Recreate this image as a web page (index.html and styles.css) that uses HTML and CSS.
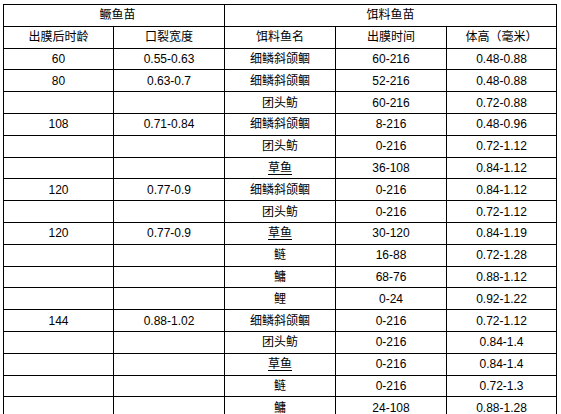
FILE: index.html
```html
<!DOCTYPE html>
<html lang="zh-CN">
<head>
<meta charset="utf-8">
<title>鳜鱼苗与饵料鱼苗</title>
<link rel="stylesheet" href="styles.css">
</head>
<body>
<table class="fish-table">
  <colgroup>
    <col class="c1"><col class="c2"><col class="c3"><col class="c4"><col class="c5">
  </colgroup>
  <thead>
    <tr><th colspan="2" class="group">鳜鱼苗</th><th colspan="3">饵料鱼苗</th></tr>
    <tr><th>出膜后时龄</th><th>口裂宽度</th><th>饵料鱼名</th><th>出膜时间</th><th>体高（毫米）</th></tr>
  </thead>
  <tbody>
    <tr><td>60</td><td>0.55-0.63</td><td>细鳞斜颌鲴</td><td>60-216</td><td>0.48-0.88</td></tr>
    <tr><td>80</td><td>0.63-0.7</td><td>细鳞斜颌鲴</td><td>52-216</td><td>0.48-0.88</td></tr>
    <tr><td></td><td></td><td>团头鲂</td><td>60-216</td><td>0.72-0.88</td></tr>
    <tr><td>108</td><td>0.71-0.84</td><td>细鳞斜颌鲴</td><td>8-216</td><td>0.48-0.96</td></tr>
    <tr><td></td><td></td><td>团头鲂</td><td>0-216</td><td>0.72-1.12</td></tr>
    <tr><td></td><td></td><td><span class="link">草鱼</span></td><td>36-108</td><td>0.84-1.12</td></tr>
    <tr><td>120</td><td>0.77-0.9</td><td>细鳞斜颌鲴</td><td>0-216</td><td>0.84-1.12</td></tr>
    <tr><td></td><td></td><td>团头鲂</td><td>0-216</td><td>0.72-1.12</td></tr>
    <tr><td>120</td><td>0.77-0.9</td><td><span class="link">草鱼</span></td><td>30-120</td><td>0.84-1.19</td></tr>
    <tr><td></td><td></td><td>鲢</td><td>16-88</td><td>0.72-1.28</td></tr>
    <tr><td></td><td></td><td>鳙</td><td>68-76</td><td>0.88-1.12</td></tr>
    <tr><td></td><td></td><td>鲤</td><td>0-24</td><td>0.92-1.22</td></tr>
    <tr><td>144</td><td>0.88-1.02</td><td>细鳞斜颌鲴</td><td>0-216</td><td>0.72-1.12</td></tr>
    <tr><td></td><td></td><td>团头鲂</td><td>0-216</td><td>0.84-1.4</td></tr>
    <tr><td></td><td></td><td><span class="link">草鱼</span></td><td>0-216</td><td>0.84-1.4</td></tr>
    <tr><td></td><td></td><td>鲢</td><td>0-216</td><td>0.72-1.3</td></tr>
    <tr><td></td><td></td><td>鳙</td><td>24-108</td><td>0.88-1.28</td></tr>
  </tbody>
</table>
</body>
</html>
```

FILE: styles.css
```css
html, body {
  margin: 0;
  padding: 0;
  background: #ffffff;
}

body {
  padding: 4px 0 0 3px;
  font-family: "Liberation Sans", Arial, "Noto Sans CJK SC", sans-serif;
  font-size: 12px;
  color: #000000;
}

.fish-table {
  border-collapse: collapse;
  table-layout: fixed;
  width: 553px;
}

.c1 { width: 110px; }
.c2 { width: 111px; }
.c3 { width: 111px; }
.c4 { width: 111px; }
.c5 { width: 110px; }

.fish-table th,
.fish-table td {
  border: 1px solid #000000;
  padding: 0;
  text-align: center;
  vertical-align: middle;
  font-weight: normal;
  line-height: 14px;
  white-space: nowrap;
}

.fish-table tr {
  height: 21.8px;
}

.fish-table th.group {
  padding-left: 7px;
}

.link {
  text-decoration: underline;
  text-underline-offset: 2px;
}
```
